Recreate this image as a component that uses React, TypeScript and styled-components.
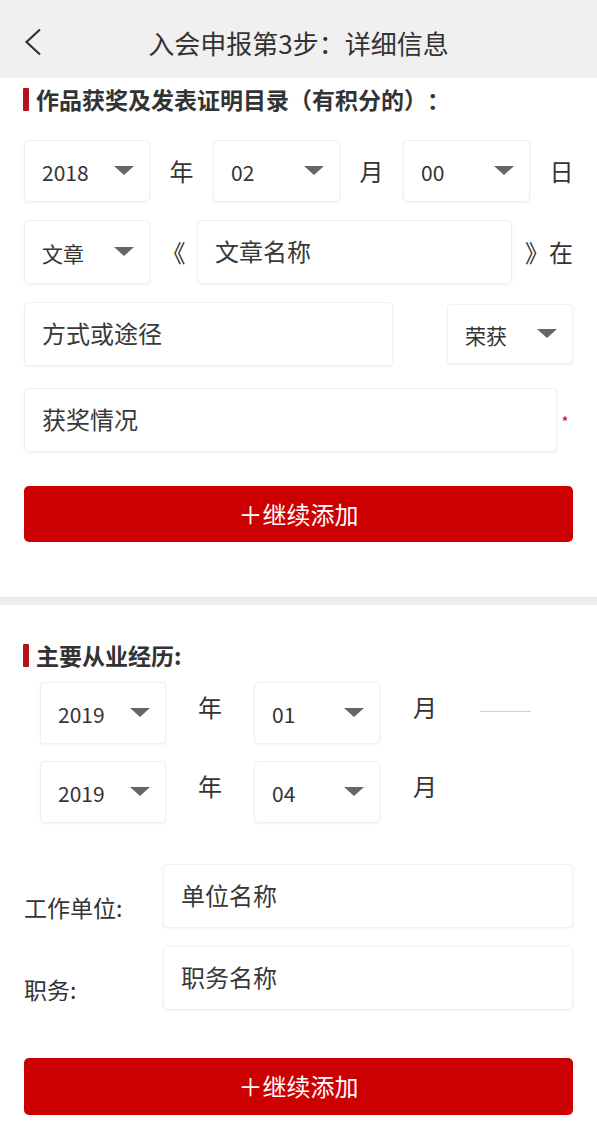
import React from "react";
import styled, { createGlobalStyle } from "styled-components";

const Global = createGlobalStyle`
  html, body { margin: 0; padding: 0; background: #fff; }
  body {
    font-family: "Noto Sans CJK SC", "Noto Sans", sans-serif;
    color: #333;
    text-spacing-trim: space-all;
  }
  * { box-sizing: border-box; }
`;

const Page = styled.div`
  width: 597px;
  background: #fff;
`;

const Header = styled.header`
  height: 78px;
  background: #f0f0f0;
  display: grid;
  grid-template-columns: 1fr auto 1fr;
  align-items: center;
`;

const Back = styled.div`
  padding-left: 24px;
  padding-top: 6px;
  display: flex;
  align-items: center;
`;

const HeaderTitle = styled.h1`
  margin: 0;
  padding-top: 6px;
  font-size: 26px;
  font-weight: 400;
  color: #333;
  text-spacing-trim: space-all;
`;

const Section = styled.section<{ $pt: number; $pb: number }>`
  padding: ${(p) => p.$pt}px 24px ${(p) => p.$pb}px 24px;
`;

const SectionTitle = styled.h2`
  margin: 0 0 0 -1px;
  display: flex;
  align-items: center;
  gap: 7px;
  font-size: 23px;
  font-weight: 700;
  line-height: 24px;
  color: #333;
  text-spacing-trim: space-all;
`;

const TitleBar = styled.span`
  width: 6px;
  height: 23px;
  background: #b3121a;
  border-radius: 1px;
`;

const Divider = styled.div`
  height: 8px;
  background: linear-gradient(#e9e9e9, #f2f2f2);
`;

const Row = styled.div<{ $mt: number; $h: number; $pl?: number }>`
  display: flex;
  align-items: center;
  margin-top: ${(p) => p.$mt}px;
  height: ${(p) => p.$h}px;
  padding-left: ${(p) => p.$pl || 0}px;
`;

const Box = styled.div<{ $w: number; $h?: number }>`
  width: ${(p) => p.$w}px;
  height: ${(p) => (p.$h ? `${p.$h}px` : "100%")};
  flex-shrink: 0;
  background: #fff;
  border: 1px solid #f0f0f0;
  border-radius: 4px;
  box-shadow: 0 1px 3px rgba(0, 0, 0, 0.05);
`;

const SelectBox = styled(Box)`
  display: flex;
  align-items: center;
  justify-content: space-between;
  padding: 2px 15px 0 17px;
  font-size: 21px;
  color: #333;
`;

const Caret = styled.span`
  width: 0;
  height: 0;
  border-left: 10px solid transparent;
  border-right: 10px solid transparent;
  border-top: 9px solid #666;
  margin-top: -4px;
`;

const InputBox = styled(Box).attrs({ as: "input" })`
  font-family: inherit;
  font-size: 24px;
  color: #333;
  padding: 0 0 4px 17px;
  outline: none;
  &::placeholder { color: #383838; }
`;

const Label = styled.span<{ $w?: number; $align?: string; $top?: number }>`
  ${(p) => (p.$w ? `width: ${p.$w}px; flex-shrink: 0;` : "flex: 1;")}
  text-align: ${(p) => p.$align || "center"};
  font-size: 24px;
  line-height: 1;
  color: #333;
  ${(p) => (p.$top !== undefined ? `align-self: flex-start; margin-top: ${p.$top}px;` : "")}
`;

const Star = styled.span`
  flex: 1;
  text-align: center;
  color: #b0102a;
  font-size: 15px;
  padding-top: 2px;
`;

const Dash = styled.span`
  width: 51px;
  height: 1px;
  background: #cfcfcf;
  margin: -4px 0 0 10px;
`;

const FieldLabel = styled.span`
  width: 139px;
  flex-shrink: 0;
  font-size: 23px;
  color: #333;
  padding-top: 22px;
`;

const AddButton = styled.button<{ $mt: number; $h: number }>`
  display: flex;
  align-items: center;
  justify-content: center;
  width: 100%;
  height: ${(p) => p.$h}px;
  margin-top: ${(p) => p.$mt}px;
  border: none;
  border-radius: 5px;
  background: #cc0000;
  color: #fff;
  font-family: inherit;
  font-size: 24px;
  padding: 0 0 2px;
`;

function Select({ value, w = 126, h }: { value: string; w?: number; h?: number }) {
  return (
    <SelectBox $w={w} $h={h}>
      <span>{value}</span>
      <Caret />
    </SelectBox>
  );
}

export default function App() {
  return (
    <Page>
      <Global />
      <Header>
        <Back>
          <svg width="18" height="28" viewBox="0 0 18 28" fill="none">
            <polyline points="16,1.5 2.5,14 16,26.5" stroke="#333" strokeWidth="2.2" strokeLinejoin="miter" />
          </svg>
        </Back>
        <HeaderTitle>入会申报第3步：详细信息</HeaderTitle>
        <div />
      </Header>

      <Section $pt={9} $pb={55}>
        <SectionTitle>
          <TitleBar />
          作品获奖及发表证明目录（有积分的）：
        </SectionTitle>

        <Row $mt={29} $h={62}>
          <Select value="2018" />
          <Label $w={63}>年</Label>
          <Select value="02" w={127} />
          <Label $w={63}>月</Label>
          <Select value="00" w={127} />
          <Label $w={63}>日</Label>
        </Row>

        <Row $mt={18} $h={64}>
          <Select value="文章" />
          <Label $w={47}>《</Label>
          <InputBox $w={315} placeholder="文章名称" />
          <Label $align="right">》在</Label>
        </Row>

        <Row $mt={18} $h={64}>
          <InputBox $w={369} placeholder="方式或途径" />
          <Label />
          <Select value="荣获" h={60} />
        </Row>

        <Row $mt={22} $h={64}>
          <InputBox $w={533} placeholder="获奖情况" />
          <Star>*</Star>
        </Row>

        <AddButton $mt={34} $h={56}>＋继续添加</AddButton>
      </Section>

      <Divider />

      <Section $pt={38} $pb={12}>
        <SectionTitle>
          <TitleBar />
          主要从业经历:
        </SectionTitle>

        <Row $mt={15} $h={62} $pl={16}>
          <Select value="2019" />
          <Label $w={88} $top={13}>年</Label>
          <Select value="01" />
          <Label $w={90} $top={13}>月</Label>
          <Dash />
        </Row>

        <Row $mt={17} $h={62} $pl={16}>
          <Select value="2019" />
          <Label $w={88} $top={13}>年</Label>
          <Select value="04" />
          <Label $w={90} $top={13}>月</Label>
        </Row>

        <Row $mt={41} $h={64}>
          <FieldLabel>工作单位:</FieldLabel>
          <InputBox $w={410} placeholder="单位名称" />
        </Row>

        <Row $mt={18} $h={64}>
          <FieldLabel>职务:</FieldLabel>
          <InputBox $w={410} placeholder="职务名称" />
        </Row>

        <AddButton $mt={48} $h={57}>＋继续添加</AddButton>
      </Section>
    </Page>
  );
}
